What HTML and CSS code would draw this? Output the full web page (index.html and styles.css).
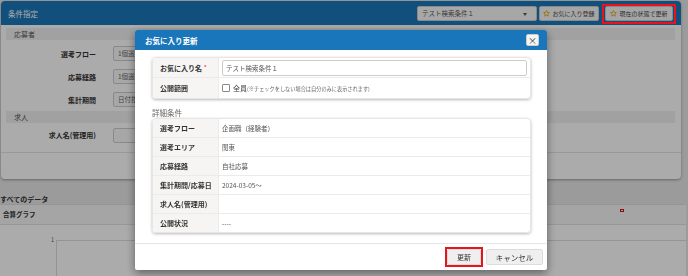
FILE: index.html
```html
<!DOCTYPE html>
<html lang="ja">
<head>
    <meta charset="UTF-8">
    <meta name="viewport" content="width=device-width, initial-scale=1.0">
    <title>条件指定</title>
    <link rel="stylesheet" href="styles.css">
</head>
<body>

    <!-- 条件指定パネル -->
    <div class="cond">
        <div class="cond-head">
            <span class="cond-title">条件指定</span>
            <div class="fav-tools">
                <div class="fav-select">テスト検索条件１<span class="caret"></span></div>
                <button class="tool-btn">
                    <svg class="star" viewBox="0 0 12 12"><polygon points="6,1 7.4,4.3 11,4.6 8.3,7 9.1,10.6 6,8.7 2.9,10.6 3.7,7 1,4.6 4.6,4.3"/></svg>
                    お気に入り登録
                </button>
                <span class="mark mark-head">
                    <button class="tool-btn wide">
                        <svg class="star" viewBox="0 0 12 12"><polygon points="6,1 7.4,4.3 11,4.6 8.3,7 9.1,10.6 6,8.7 2.9,10.6 3.7,7 1,4.6 4.6,4.3"/></svg>
                        現在の状態で更新
                    </button>
                </span>
            </div>
        </div>
        <div class="cond-body">
            <div class="sec-band">応募者</div>
            <div class="cond-row"><span class="cond-label">選考フロー</span><div class="pick">1個選択</div></div>
            <div class="cond-row"><span class="cond-label">応募経路</span><div class="pick">1個選択</div></div>
            <div class="cond-row"><span class="cond-label">集計期間</span><div class="pick">日付指定</div></div>
            <div class="sec-band">求人</div>
            <div class="cond-row tall"><span class="cond-label">求人名(管理用)</span><div class="pick"></div></div>
        </div>
        <div class="cond-foot"></div>
    </div>

    <!-- データ -->
    <div class="data-title">すべてのデータ</div>
    <div class="graph">
        <div class="graph-head">合算グラフ<span class="graph-icon"></span></div>
        <div class="chart">
            <span class="tick">1</span>
            <div class="plot"></div>
        </div>
    </div>

    <!-- お気に入り更新 モーダル -->
    <div class="overlay"></div>
    <div class="modal">
        <div class="modal-head">
            <span>お気に入り更新</span>
            <button class="close">×</button>
        </div>
        <div class="modal-body">
            <div class="card">
                <div class="card-row">
                    <div class="card-label">お気に入り名<span class="req">*</span></div>
                    <div class="card-value"><input class="text-input" type="text" value="テスト検索条件１"></div>
                </div>
                <div class="card-row">
                    <div class="card-label">公開範囲</div>
                    <div class="card-value">
                        <label class="check"><span class="box"></span>全員<small>(※チェックをしない場合は自分のみに表示されます)</small></label>
                    </div>
                </div>
            </div>

            <div class="sub-title">詳細条件</div>
            <div class="card detail">
                <div class="card-row"><div class="card-label">選考フロー</div><div class="card-value">企画職（経験者）</div></div>
                <div class="card-row"><div class="card-label">選考エリア</div><div class="card-value">関東</div></div>
                <div class="card-row"><div class="card-label">応募経路</div><div class="card-value">自社応募</div></div>
                <div class="card-row"><div class="card-label">集計期間/応募日</div><div class="card-value">2024-03-05〜</div></div>
                <div class="card-row"><div class="card-label">求人名(管理用)</div><div class="card-value"></div></div>
                <div class="card-row"><div class="card-label">公開状況</div><div class="card-value">----</div></div>
            </div>
        </div>
        <div class="modal-foot">
            <span class="mark"><button class="btn">更新</button></span>
            <button class="btn">キャンセル</button>
        </div>
    </div>

</body>
</html>
```

FILE: styles.css
```css
/* Global */
* {
    margin: 0;
    padding: 0;
    box-sizing: border-box;
    font-family: "Noto Sans CJK JP", "Noto Sans", sans-serif;
}

body {
    width: 688px;
    height: 276px;
    overflow: hidden;
    background-color: #e8e8e8;
    color: #333;
    font-size: 7px;
}

button {
    font-family: inherit;
    cursor: pointer;
}

/* 条件指定パネル */
.cond {
    margin: 1px 0 0 1px;
    width: 680px;
    background: #fff;
    border-radius: 4px;
    box-shadow: 0 1px 3px rgba(0, 0, 0, 0.35);
}

.cond-head {
    height: 24px;
    background: #1a76bb;
    border-radius: 4px 4px 0 0;
    display: flex;
    align-items: center;
    padding: 0 8px 0 7px;
    color: #fff;
}

.cond-title {
    font-size: 7.5px;
}

.fav-tools {
    margin-left: auto;
    display: flex;
    align-items: center;
    gap: 2px;
}

.fav-select {
    width: 120px;
    height: 15px;
    background: #fafafa;
    border: 1px solid #ccc;
    border-radius: 2px;
    color: #555;
    font-size: 6.5px;
    line-height: 13px;
    padding-left: 4px;
    position: relative;
}

.caret {
    position: absolute;
    right: 9px;
    top: 6px;
    border-left: 2.5px solid transparent;
    border-right: 2.5px solid transparent;
    border-top: 3px solid #555;
}

.tool-btn {
    height: 15px;
    width: 60px;
    background: #f7f7f7;
    border: 1px solid #ccc;
    border-radius: 2px;
    color: #444;
    font-size: 6px;
    display: flex;
    align-items: center;
    justify-content: center;
    gap: 2px;
}

.tool-btn.wide {
    width: 68px;
}

.star {
    width: 7px;
    height: 7px;
    fill: none;
    stroke: #d9a300;
    stroke-width: 1.3;
}

.mark {
    position: relative;
    display: inline-block;
}

.mark-head {
    margin-left: 4px;
}

/* annotation frame, drawn above the dim layer */
.mark::after {
    content: "";
    position: absolute;
    top: -2px;
    left: -2px;
    right: -2px;
    bottom: -2px;
    border: 2px solid #e8141c;
    z-index: 20;
}

.mark-head::after {
    top: -2px;
    left: -3px;
    right: -3px;
    bottom: -3px;
}

.cond-body {
    padding: 3px 6px 0 5px;
}

.sec-band {
    height: 12px;
    line-height: 12px;
    background: #f1f1f1;
    color: #555;
    padding-left: 8px;
}

.cond-row {
    height: 23px;
    display: flex;
    align-items: center;
    gap: 17px;
}

.cond-row:nth-child(2) {
    margin-top: 2px;
}

.cond-row.tall {
    height: 24px;
}

.cond-label {
    width: 90px;
    text-align: right;
    font-weight: bold;
    color: #333;
}

.pick {
    width: 170px;
    height: 15px;
    border: 1px solid #ccc;
    border-radius: 2px;
    background: #fafafa;
    color: #666;
    font-size: 6.5px;
    line-height: 13px;
    padding-left: 4px;
}

.cond-foot {
    margin-top: 5px;
    height: 27px;
    border-top: 1px solid #e4e4e4;
}

/* データ */
.data-title {
    margin: 15px 0 0 0;
    height: 10px;
    line-height: 10px;
    font-weight: bold;
    color: #333;
}

.graph {
    margin-left: -4px;
    width: 690px;
    height: 80px;
    background: #fff;
    border-radius: 4px 4px 0 0;
    border-top: 1px solid #ddd;
}

.graph-head {
    height: 20px;
    line-height: 19px;
    padding-left: 7px;
    background: #f6f6f6;
    border-bottom: 1px solid #e2e2e2;
    font-weight: bold;
    font-size: 6.5px;
    position: relative;
}

.graph-icon {
    position: absolute;
    left: 624px;
    top: 4px;
    width: 4px;
    height: 3px;
    border: 1px solid #d01010;
}

.chart {
    position: relative;
    height: 60px;
}

.tick {
    position: absolute;
    left: 55px;
    top: 11px;
    font-size: 5.5px;
    color: #555;
}

.plot {
    position: absolute;
    left: 60px;
    top: 15px;
    right: 0;
    bottom: 0;
    border-top: 1px solid #ddd;
    border-left: 1px solid #ddd;
}

/* Modal */
.overlay {
    position: fixed;
    top: 0;
    left: 0;
    width: 100%;
    height: 100%;
    background: rgba(0, 0, 0, 0.33);
    z-index: 10;
}

.modal {
    position: fixed;
    left: 135px;
    top: 30px;
    width: 412px;
    height: 240px;
    background: #fff;
    border-radius: 2px;
    box-shadow: 0 3px 10px rgba(0, 0, 0, 0.45);
    z-index: 15;
    display: flex;
    flex-direction: column;
}

.modal-head {
    height: 20px;
    background: #1a76bb;
    border-radius: 2px 2px 0 0;
    color: #fff;
    font-weight: bold;
    font-size: 7.5px;
    display: flex;
    align-items: center;
    padding: 0 8px 0 10px;
}

.close {
    margin-left: auto;
    width: 13px;
    height: 12px;
    background: #f4f4f4;
    border: 1px solid #ccc;
    border-radius: 2px;
    color: #333;
    font-size: 9px;
    line-height: 9px;
}

.modal-body {
    flex: 1;
    padding: 7px 16px 0 17px;
}

.card {
    border: 1px solid #e6e6e6;
    border-radius: 4px;
    box-shadow: 0 1px 3px rgba(0, 0, 0, 0.28);
    overflow: hidden;
}

.card-row {
    display: flex;
    height: 20px;
    border-bottom: 1px solid #ebebeb;
}

.card-row:last-child {
    border-bottom: none;
}

.detail .card-row {
    height: 19px;
}

.detail .card-row:last-child {
    height: 18px;
}

.card-label {
    width: 66px;
    flex-shrink: 0;
    background: #f6f5f3;
    border-right: 1px solid #ebebeb;
    padding-left: 7px;
    font-weight: bold;
    display: flex;
    align-items: center;
    color: #333;
}

.req {
    color: #e03030;
    font-size: 5px;
    margin-left: 2px;
    align-self: flex-start;
    margin-top: 5px;
}

.card-value {
    flex: 1;
    display: flex;
    align-items: center;
    padding: 0 3px 0 3px;
    font-size: 6.5px;
    color: #555;
}

.text-input {
    width: 100%;
    height: 16px;
    border: 1px solid #ccc;
    border-radius: 2px;
    padding-left: 3px;
    font-family: inherit;
    font-size: 6.5px;
    color: #555;
    outline: none;
}

.check {
    display: flex;
    align-items: center;
    font-size: 7px;
    color: #444;
}

.box {
    width: 8px;
    height: 8px;
    border: 1px solid #888;
    border-radius: 1px;
    margin-right: 3px;
    background: #fff;
}

.check small {
    font-size: 5.2px;
    color: #666;
}

.sub-title {
    margin: 9px 0 1px;
    height: 9px;
    line-height: 9px;
    font-size: 7.5px;
    color: #666;
}

.modal-foot {
    height: 27px;
    border-top: 1px solid #e6e6e6;
    display: flex;
    justify-content: flex-end;
    align-items: center;
    gap: 5px;
    padding: 0 4px;
}

.btn {
    height: 16px;
    background: #efefef;
    border: 1px solid #dcdcdc;
    border-radius: 2px;
    color: #333;
    font-size: 7px;
    display: block;
}

.mark .btn {
    width: 34px;
}

.btn + .btn,
.mark + .btn {
    width: 57px;
    font-size: 7.5px;
}
```
